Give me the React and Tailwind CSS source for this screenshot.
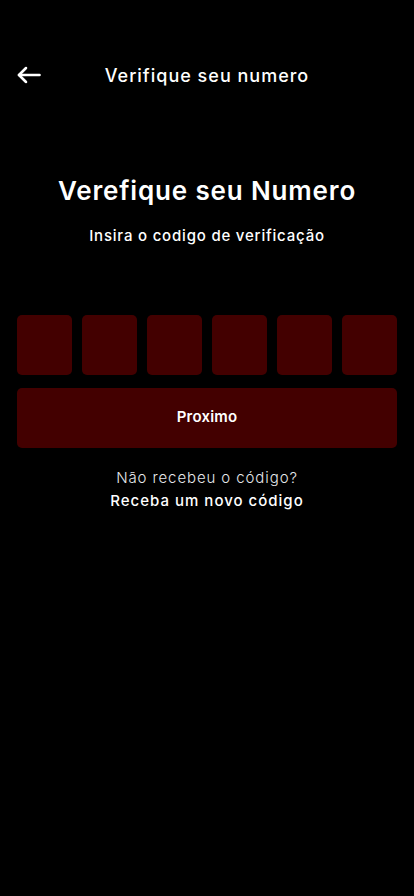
import React from 'react'

function BackArrow() {
  return (
    <svg width="24" height="17" viewBox="0 0 24 17" fill="none" stroke="white" strokeWidth="2.6" strokeLinecap="round" strokeLinejoin="round">
      <path d="M22.5 8.5H2" />
      <path d="M9 1.5L2 8.5L9 15.5" />
    </svg>
  )
}

export default function App() {
  return (
    <div className="min-h-[896px] w-full bg-black text-white font-['Inter',sans-serif] pt-[60px]">
      {/* Header */}
      <div className="relative flex items-center justify-center h-[30px]">
        <button className="absolute left-[17px] top-1/2 -translate-y-1/2">
          <BackArrow />
        </button>
        <h1 className="text-[18px] font-medium tracking-[1px]">Verifique seu numero</h1>
      </div>

      {/* Title */}
      <div className="flex flex-col items-center mt-[84px]">
        <h2 className="text-[26px] font-semibold leading-[34px] tracking-[0.85px]">Verefique seu Numero</h2>
        <p className="mt-[17px] text-[15px] font-medium tracking-[0.8px]">Insira o codigo de verificação</p>
      </div>

      {/* Code inputs */}
      <div className="px-[17px] mt-[67px]">
        <div className="flex gap-[10px]">
          {[0, 1, 2, 3, 4, 5].map((i) => (
            <div key={i} className="w-[55px] h-[60px] rounded-[5px] bg-[#430000]"></div>
          ))}
        </div>
        <button className="mt-[13px] w-full h-[60px] rounded-[5px] bg-[#430000] text-[15px] font-semibold tracking-[0.2px]">
          Proximo
        </button>
      </div>

      {/* Resend */}
      <div className="flex flex-col items-center mt-[19px] text-[15px]">
        <p className="font-light text-gray-200 leading-[22px] tracking-[0.9px]">Não recebeu o código?</p>
        <p className="font-medium leading-[23px] tracking-[1px]">Receba um novo código</p>
      </div>
    </div>
  )
}
